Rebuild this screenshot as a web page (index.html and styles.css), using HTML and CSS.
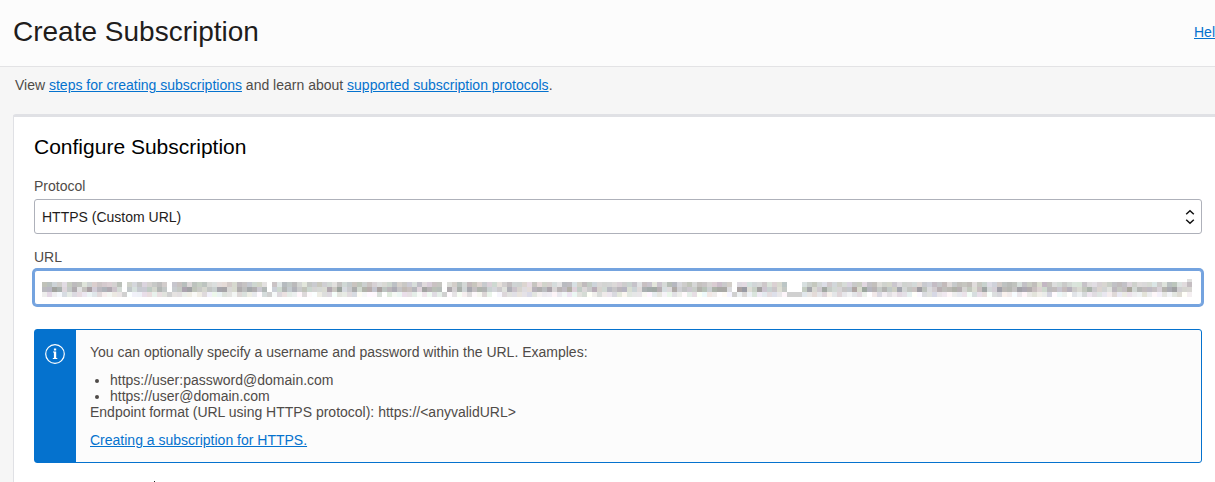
FILE: index.html
```html
<!DOCTYPE html>
<html lang="en">
<head>
<meta charset="utf-8">
<title>Create Subscription</title>
<link rel="stylesheet" href="styles.css">
</head>
<body>
<header class="header">
  <h1 class="title">Create Subscription</h1>
  <a class="link" href="#">Hel</a>
</header>
<main class="main">
  <p class="intro">View <a class="link" href="#">steps for creating subscriptions</a> and learn about <a class="link" href="#">supported subscription protocols</a>.</p>
  <section class="panel">
    <h2 class="panel-title">Configure Subscription</h2>
    <div class="field">
      <label class="label" for="protocol">Protocol</label>
      <div class="control-wrap">
        <select class="control" id="protocol"><option>HTTPS (Custom URL)</option></select>
        <svg class="arrows" viewBox="0 0 10 16" aria-hidden="true"><path d="M1.2 5.2 5 1.8l3.8 3.4M1.2 10.8 5 14.2l3.8-3.4"/></svg>
      </div>
    </div>
    <div class="field">
      <label class="label" for="url">URL</label>
      <div class="control-wrap">
        <input class="control control-focus" id="url" type="text">
        <canvas class="mask" width="230" height="3"></canvas>
        <span class="mask-tip"></span>
      </div>
    </div>
    <div class="alert">
      <div class="alert-side">
        <svg class="info" viewBox="0 0 20 20" aria-hidden="true"><circle cx="10" cy="10" r="9.3"/><path class="solid" d="M8.9 4.5h2.3v2H8.9zM8 7.6h3.2v6.4h1.1v1H7.8v-1h1.1V8.6H8z"/></svg>
      </div>
      <div class="alert-body">
        <p class="line">You can optionally specify a username and password within the URL. Examples:</p>
        <ul class="examples">
          <li>https://user:password@domain.com</li>
          <li>https://user@domain.com</li>
        </ul>
        <p class="line">Endpoint format (URL using HTTPS protocol): https://&lt;anyvalidURL&gt;</p>
        <a class="link" href="#">Creating a subscription for HTTPS.</a>
      </div>
    </div>
    <div class="next"></div>
  </section>
</main>
<script src="mask.js"></script>
</body>
</html>
```
FILE: styles.css
```css
* { box-sizing: border-box; }
body {
  margin: 0;
  min-height: 100vh;
  overflow: hidden;
  background: #f6f6f6;
  color: #4f4b48;
  font: 14px/16px "Liberation Sans", Arial, sans-serif;
}
h1, h2, p, ul { margin: 0; font-weight: 400; }
.link { color: #0572ce; text-decoration: underline; }
.header {
  display: flex;
  align-items: center;
  justify-content: space-between;
  padding: 16px 0 18px 13px;
  background: #fcfcfc;
  border-bottom: 1px solid #e3e3e5;
}
.title { font-size: 28px; line-height: 32px; color: #1f1d1c; }
.main { padding: 10px 0 0 13px; }
.intro { padding: 0 2px; }
.panel {
  margin-top: 21px;
  padding: 18px 13px 18px 20px;
  background: #fff;
  border-top: 3px solid #e0e1e5;
  border-left: 1px solid #e0e1e5;
  border-top-left-radius: 3px;
}
.panel-title { margin-bottom: 19px; font-size: 21px; line-height: 24px; color: #000; }
.field { margin-bottom: 15px; }
.label { display: block; margin-bottom: 5px; }
.control-wrap { position: relative; }
.control {
  display: block;
  width: 100%;
  height: 35px;
  padding: 0 7px;
  border: 1px solid #aeb1ba;
  border-radius: 3px;
  background: #fff;
  color: #1f1d1c;
  font: inherit;
  appearance: none;
  outline: none;
}
.control-focus { border-color: #74a3df; box-shadow: 0 0 0 2px #74a3df; }
.arrows {
  position: absolute;
  top: 10px;
  right: 7px;
  width: 10px;
  height: 16px;
  fill: none;
  stroke: #111;
  stroke-width: 1.5;
}
.mask {
  position: absolute;
  top: 12px;
  left: 8px;
  width: calc(100% - 18px);
  height: 15px;
  image-rendering: pixelated;
  pointer-events: none;
}
.mask-tip {
  position: absolute;
  top: 9px;
  right: 10px;
  width: 5px;
  height: 3px;
  background: #dfdfdf;
}
.alert {
  display: flex;
  margin-top: 24px;
  border: 1px solid #0572ce;
  border-radius: 3px;
  background: #fcfcfc;
}
.alert-side { width: 41px; padding: 14px 10px; background: #0572ce; }
.info { display: block; width: 20px; height: 20px; fill: none; stroke: #fff; stroke-width: 1.2; }
.info .solid { fill: #fff; stroke: none; }
.alert-body { flex: 1; padding: 14px; }
.examples { margin-top: 12px; padding-left: 20px; }
.alert-body > .link { display: inline-block; margin-top: 12px; vertical-align: top; }
.next { width: 1px; height: 1px; margin: 18px 0 0 120px; background: #222; }
```
FILE: mask.js
```js
// Paints the mosaic that hides the URL value.
const ctx = document.querySelector('.mask').getContext('2d');
const gaps = [16, 25, 45, 80, 138, 149, 150, 151];
const rows = [[188, 38], [160, 62], [218, 36]];
let seed = 29;
const rand = () => (seed = (seed * 16807) % 2147483647) / 2147483647;
for (let x = 0; x < 230; x++) {
  rows.forEach(([base, range], y) => {
    const gap = gaps.includes(x);
    if (gap && y < 2) return;
    const grey = gap ? 208 : base + rand() * range;
    const tint = () => Math.round(grey + (gap ? 0 : (rand() - 0.5) * 14));
    ctx.fillStyle = `rgb(${tint()},${tint()},${tint()})`;
    ctx.fillRect(x, y, 1, 1);
  });
}
```
